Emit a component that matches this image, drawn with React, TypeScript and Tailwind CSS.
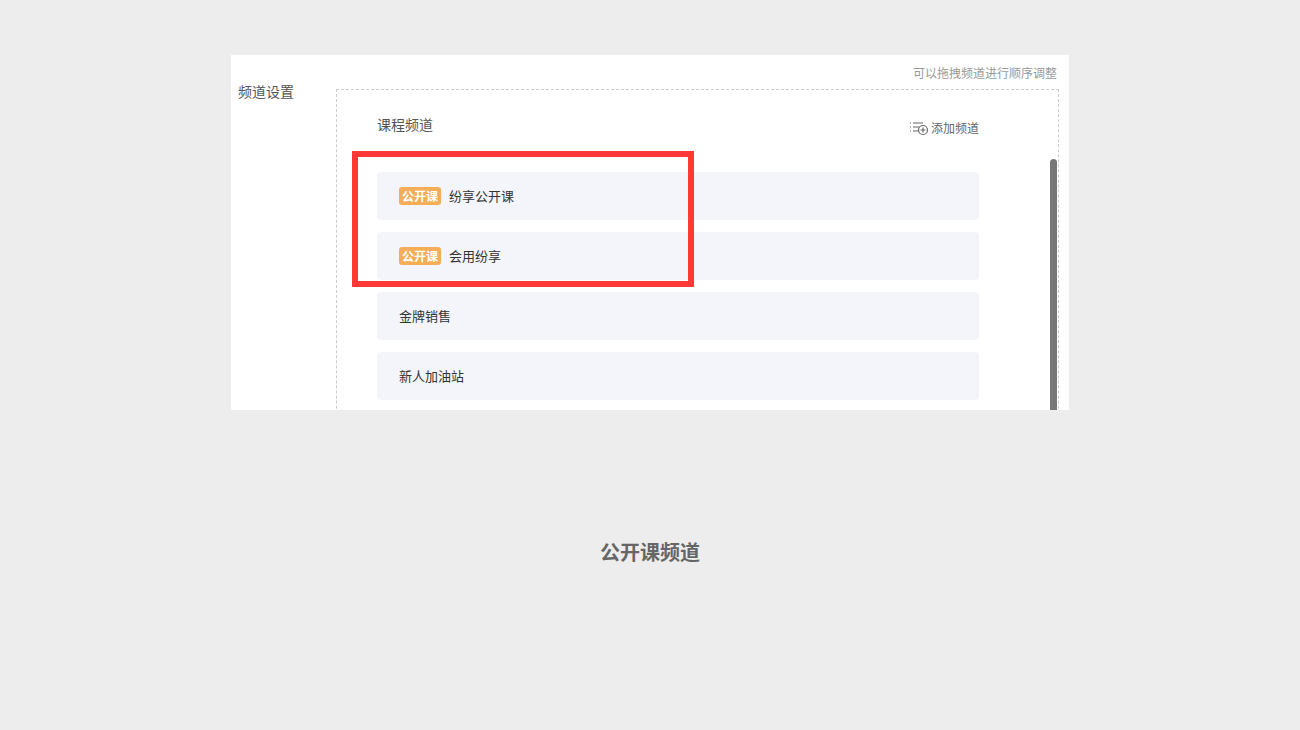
export default function App() {
  const items = [
    { tag: true, label: "纷享公开课" },
    { tag: true, label: "会用纷享" },
    { tag: false, label: "金牌销售" },
    { tag: false, label: "新人加油站" },
  ];
  const font = { fontFamily: '"Noto Sans CJK SC", "Liberation Sans", sans-serif' };

  return (
    <div className="w-[1300px] h-[730px] bg-[#ededed] flex flex-col items-center" style={font}>
      <div className="mt-[55px] w-[838px] h-[355px] bg-white relative overflow-hidden">
        <div className="text-right text-xs text-[#999] pr-[12px] pt-[10px] leading-[16px]">可以拖拽频道进行顺序调整</div>
        <div className="flex">
          <div className="w-[105px] pl-[7px] text-sm text-[#555]">频道设置</div>
          <div className="mt-[8px] w-[723px] h-[400px] border border-dashed border-[#ccc] relative">
            <div className="pl-[40px] pr-[79px] pt-[24px] flex justify-between items-start">
              <span className="text-sm text-[#555]">课程频道</span>
              <span className="flex items-center gap-[2px] text-xs text-[#666] mt-[6px]">
                <svg width="20" height="16" viewBox="0 0 20 16" fill="none" stroke="#666" strokeWidth="1.2">
                  <path d="M1 3h1M4 3h10M1 7h1M4 7h6M1 11h1M4 11h5" />
                  <circle cx="14" cy="10" r="4.5" />
                  <path d="M14 7.5v5M11.5 10h5" />
                </svg>
                添加频道
              </span>
            </div>
            <div className="pl-[40px] pr-[79px] mt-[36px] flex flex-col gap-[12px]">
              {items.map((it) => (
                <div key={it.label} className="h-[48px] bg-[#f4f5fa] rounded flex items-center pl-[22px] gap-[8px] text-[13px] text-[#333]">
                  {it.tag && (
                    <span className="bg-[#f5ad58] text-white text-[12px] font-bold rounded-[3px] px-[3px] leading-[18px]">公开课</span>
                  )}
                  {it.label}
                </div>
              ))}
            </div>
            <div className="absolute right-[1px] top-[69px] w-[7px] h-[300px] bg-[#777] rounded-full" />
          </div>
        </div>
        <div className="absolute left-[121px] top-[96px] w-[342px] h-[136px] border-[6px] border-[#ff3838]" />
      </div>
      <div className="mt-[128px] text-xl font-bold text-[#666]">公开课频道</div>
    </div>
  );
}
